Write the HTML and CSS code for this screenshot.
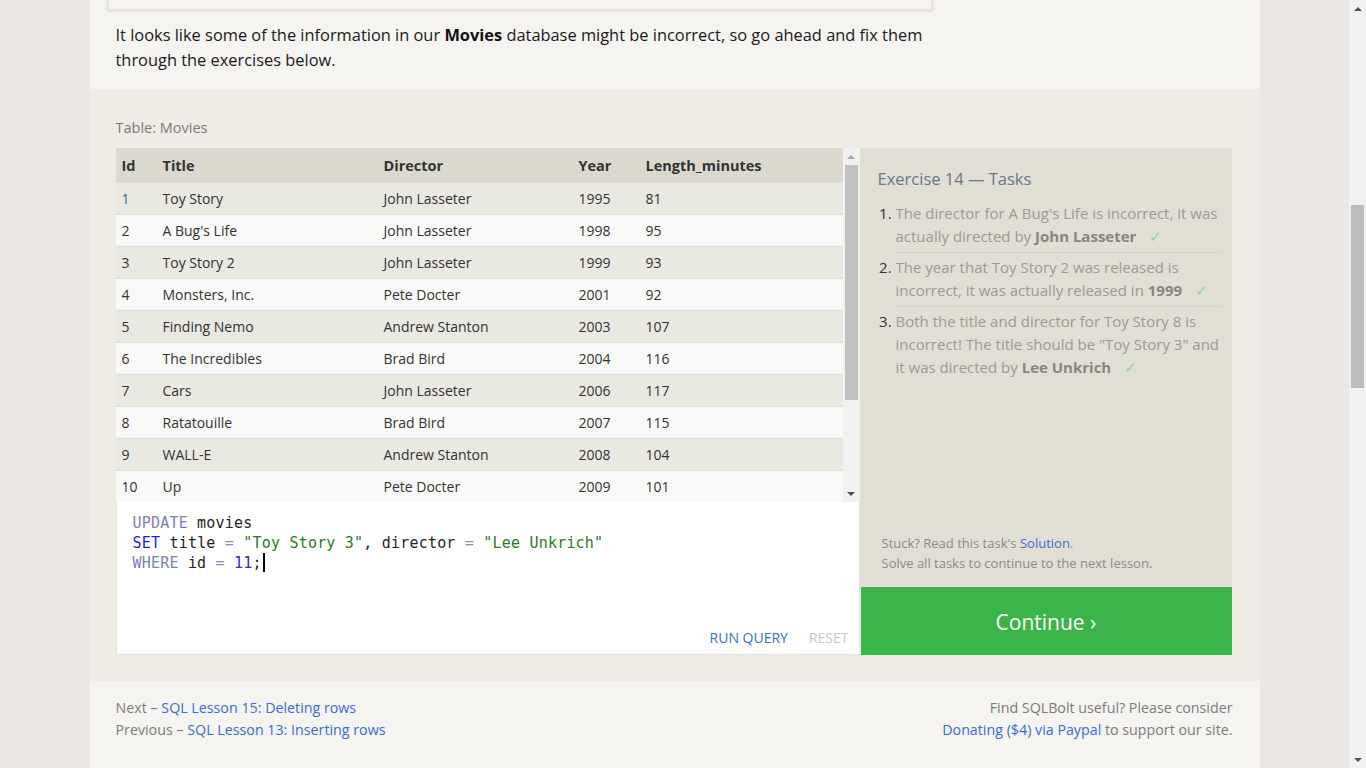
FILE: index.html
```html
<!DOCTYPE html>
<html>
<head>
<meta charset="utf-8">
<link rel="stylesheet" href="styles.css">
</head>
<body>
<div class="viewport">
  <div class="page">
    <div class="container">
      <div class="intro">
        <div class="prevbox"></div>
        <p class="intro-text">It looks like some of the information in our <strong>Movies</strong> database might be incorrect, so go ahead and fix them through the exercises below.</p>
      </div>

      <div class="exercise">
        <div class="table-label">Table: Movies</div>
        <div class="ex-grid">
          <div class="ex-left">
            <div class="table-wrap">
              <div class="table-clip">
                <table class="movies">
                  <thead>
                    <tr><th class="c-id">Id</th><th class="c-title">Title</th><th class="c-dir">Director</th><th class="c-year">Year</th><th>Length_minutes</th></tr>
                  </thead>
                  <tbody>
                    <tr><td class="id-hl">1</td><td>Toy Story</td><td>John Lasseter</td><td>1995</td><td>81</td></tr>
                    <tr><td>2</td><td>A Bug's Life</td><td>John Lasseter</td><td>1998</td><td>95</td></tr>
                    <tr><td>3</td><td>Toy Story 2</td><td>John Lasseter</td><td>1999</td><td>93</td></tr>
                    <tr><td>4</td><td>Monsters, Inc.</td><td>Pete Docter</td><td>2001</td><td>92</td></tr>
                    <tr><td>5</td><td>Finding Nemo</td><td>Andrew Stanton</td><td>2003</td><td>107</td></tr>
                    <tr><td>6</td><td>The Incredibles</td><td>Brad Bird</td><td>2004</td><td>116</td></tr>
                    <tr><td>7</td><td>Cars</td><td>John Lasseter</td><td>2006</td><td>117</td></tr>
                    <tr><td>8</td><td>Ratatouille</td><td>Brad Bird</td><td>2007</td><td>115</td></tr>
                    <tr><td>9</td><td>WALL-E</td><td>Andrew Stanton</td><td>2008</td><td>104</td></tr>
                    <tr><td>10</td><td>Up</td><td>Pete Docter</td><td>2009</td><td>101</td></tr>
                  </tbody>
                </table>
              </div>
              <div class="vscroll">
                <div class="arrow arrow-up"></div>
                <div class="track"><div class="thumb"></div></div>
                <div class="arrow arrow-down"></div>
              </div>
            </div>
            <div class="editor">
              <pre class="code"><span class="kw">UPDATE</span> movies
<span class="kw2">SET</span> title <span class="op">=</span> <span class="str">"Toy Story 3"</span>, director <span class="op">=</span> <span class="str">"Lee Unkrich"</span>
<span class="kw">WHERE</span> id <span class="op">=</span> <span class="num">11</span>;<span class="cursor"></span></pre>
              <div class="editor-actions">
                <span class="run">RUN QUERY</span>
                <span class="reset">RESET</span>
              </div>
            </div>
          </div>

          <div class="ex-right">
            <div class="tasks">
              <div class="tasks-title">Exercise 14 — Tasks</div>
              <ol class="task-list">
                <li>The director for A Bug's Life is incorrect, it was actually directed by <strong>John Lasseter</strong><span class="check">✓</span></li>
                <li>The year that Toy Story 2 was released is incorrect, it was actually released in <strong>1999</strong><span class="check">✓</span></li>
                <li>Both the title and director for Toy Story 8 is incorrect! The title should be "Toy Story 3" and it was directed by <strong>Lee Unkrich</strong><span class="check">✓</span></li>
              </ol>
              <div class="stuck">
                <div>Stuck? Read this task's <span class="link">Solution</span>.</div>
                <div>Solve all tasks to continue to the next lesson.</div>
              </div>
            </div>
            <div class="continue">Continue ›</div>
          </div>
        </div>
      </div>

      <div class="footer">
        <div class="footer-left">
          <div>Next – <span class="link">SQL Lesson 15: Deleting rows</span></div>
          <div>Previous – <span class="link">SQL Lesson 13: Inserting rows</span></div>
        </div>
        <div class="footer-right">
          <div>Find SQLBolt useful? Please consider</div>
          <div><span class="link">Donating ($4) via Paypal</span> to support our site.</div>
        </div>
      </div>
    </div>
  </div>
  <div class="winscroll">
    <div class="arrow arrow-up"></div>
    <div class="wtrack"><div class="wthumb"></div></div>
    <div class="arrow arrow-down"></div>
  </div>
</div>
</body>
</html>
```

FILE: styles.css
```css
* { box-sizing: border-box; }
html, body {
  margin: 0;
  padding: 0;
  height: 100%;
  overflow: hidden;
}
body {
  font-family: "Open Sans", "Liberation Sans", sans-serif;
  background: #ece7e4;
  color: #333;
}
.viewport {
  display: flex;
  height: 768px;
  width: 1366px;
}
.page {
  flex: 1;
  display: flex;
  justify-content: center;
  overflow: hidden;
}
.container {
  width: 1170px;
  background: #f5f4f1;
  display: flex;
  flex-direction: column;
}

/* intro */
.intro {
  padding: 0 26px 0 16px;
}
.prevbox {
  width: 828px;
  height: 12px;
  border: 3px solid #e7e5dc;
  border-top: none;
}
.intro-text {
  margin: 10px 0 17px 10px;
  width: 820px;
  font-size: 16.4px;
  line-height: 25px;
  color: #1a1a1a;
}
.intro-text strong { font-weight: 700; color: #111; }

/* exercise */
.exercise {
  background: #efece6;
  padding: 29px 28px 26px 26px;
}
.table-label {
  font-size: 14.5px;
  color: #7b7b7b;
  line-height: 20px;
  margin-bottom: 10px;
}
.ex-grid {
  display: flex;
}
.ex-left {
  width: 744px;
  display: flex;
  flex-direction: column;
}
.table-wrap {
  display: flex;
  height: 354px;
  background: #f9f9f8;
}
.table-clip {
  flex: 1;
  overflow: hidden;
  background: #f9f9f8;
}
.movies {
  width: 100%;
  border-collapse: collapse;
  font-size: 14px;
  color: #333;
}
.movies th {
  background: #dbd9cd;
  text-align: left;
  font-weight: 700;
  font-size: 14.5px;
  height: 34px;
  padding: 1px 0 0 6px;
  color: #333;
}
.movies td {
  height: 32px;
  padding: 0 0 0 6px;
  border-top: 1px solid #e0ded7;
}
.movies tbody tr:nth-child(odd) td { background: #e9e8e1; }
.movies tbody tr:nth-child(even) td { background: #f9f9f8; }
.c-id { width: 41px; }
.c-title { width: 221px; }
.c-dir { width: 195px; }
.c-year { width: 67px; }
.id-hl { color: #2f5fa8; }

.vscroll {
  width: 17px;
  background: #f1f1f1;
  display: flex;
  flex-direction: column;
}
.vscroll .track { flex: 1; padding: 0 2px; }
.vscroll .thumb {
  height: 235px;
  background: #c1c1c1;
}
.arrow {
  height: 17px;
  display: flex;
  align-items: center;
  justify-content: center;
}
.arrow::before {
  content: "";
  width: 0;
  height: 0;
  border-left: 4px solid transparent;
  border-right: 4px solid transparent;
}
.arrow-up::before { border-bottom: 4px solid #a3a3a3; }
.arrow-down::before { border-top: 4px solid #505050; }

.editor {
  height: 153px;
  background: #fff;
  border: 1px solid #e4e2da;
  border-top: none;
  display: flex;
  flex-direction: column;
  justify-content: space-between;
}
.code {
  margin: 0;
  padding: 11px 16px 0 16px;
  font-family: "DejaVu Sans Mono", "Liberation Mono", monospace;
  font-size: 15px;
  line-height: 20px;
  color: #222;
  letter-spacing: 0.2px;
}
.kw { color: #7a7fb7; }
.kw2 { color: #1c1cf0; }
.op { color: #8a8ab6; }
.str { color: #2a7a1e; }
.num { color: #2a2ae0; }
.cursor {
  display: inline-block;
  width: 2px;
  height: 19px;
  background: #000;
  vertical-align: -4px;
  margin-left: 1px;
}
.editor-actions {
  display: flex;
  justify-content: flex-end;
  gap: 21px;
  padding: 0 10px 6px 0;
  font-size: 14px;
  line-height: 20px;
}
.run { color: #3a6bd9; }
.reset { color: #c9c9c9; }

.ex-right {
  width: 372px;
  display: flex;
  flex-direction: column;
}
.tasks {
  flex: 1;
  background: #e1dfd4;
  padding: 19px 8px 14px 18px;
  display: flex;
  flex-direction: column;
}
.tasks-title {
  font-size: 16.5px;
  color: #6a7689;
  line-height: 24px;
  margin-bottom: 11px;
}
.task-list {
  margin: 0;
  padding: 0 0 0 18px;
  flex: 1;
}
.task-list li {
  font-size: 15px;
  line-height: 23px;
  color: #9b9a93;
  padding-bottom: 4px;
  margin-bottom: 3px;
  border-bottom: 1px solid #d5d3c8;
  width: 326px;
}
.task-list li:last-child { border-bottom: none; }
.task-list li::marker { color: #333; }
.task-list strong { color: #878680; font-weight: 700; }
.check {
  color: #8fd0a0;
  margin-left: 13px;
  font-size: 15px;
}
.stuck {
  font-size: 13px;
  line-height: 20px;
  color: #8b8a85;
  padding-left: 4px;
}
.link { color: #3a6bd9; }
.continue {
  height: 68px;
  background: #3bb54a;
  color: #fff;
  font-size: 21px;
  display: flex;
  align-items: center;
  justify-content: center;
  margin-left: 1px;
  padding-top: 1px;
}

/* footer */
.footer {
  display: flex;
  justify-content: space-between;
  padding: 16px 27px 0 26px;
  font-size: 14.25px;
  line-height: 22px;
  color: #7b7b7b;
}
.footer-right { text-align: right; }

/* window scrollbar */
.winscroll {
  width: 17px;
  background: #f1f1f1;
  display: flex;
  flex-direction: column;
}
.wtrack { flex: 1; padding: 188px 2px 0 2px; }
.wthumb { height: 183px; background: #bcbcbc; }
.winscroll .arrow-up::before { border-bottom-color: #505050; }
```
